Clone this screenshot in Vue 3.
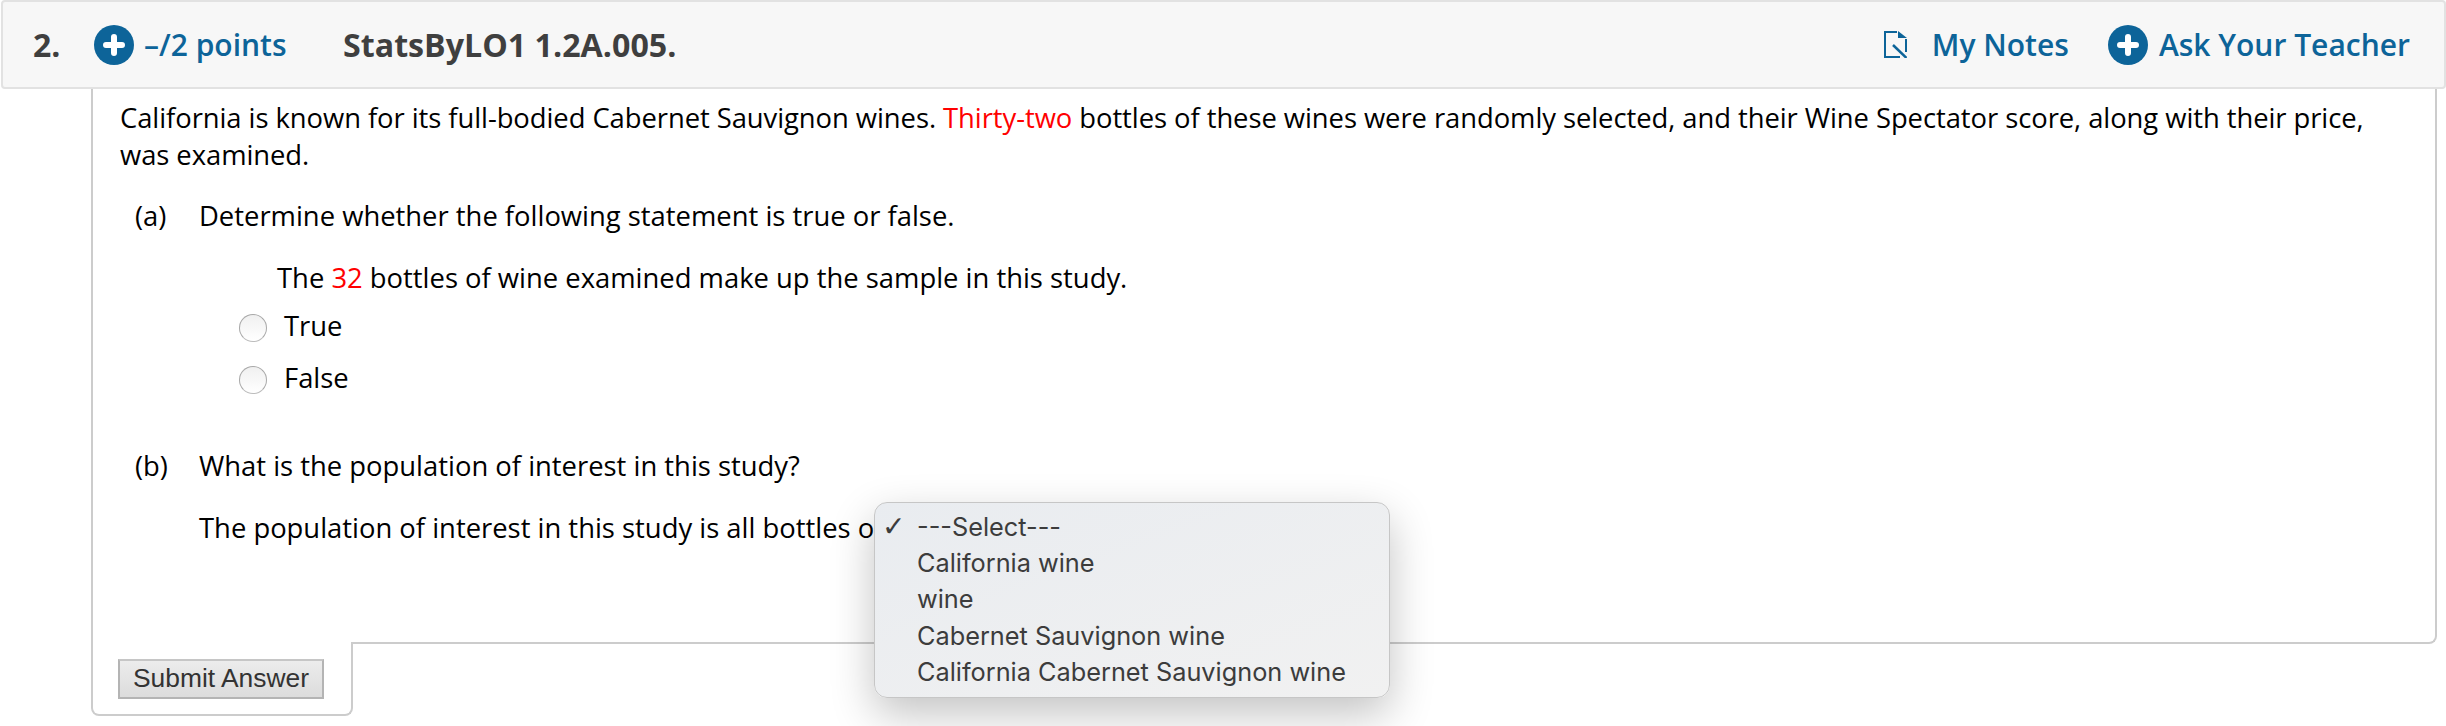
<script setup>
const options = ['California wine', 'wine', 'Cabernet Sauvignon wine', 'California Cabernet Sauvignon wine']
</script>

<template>
  <div class="page">
    <header class="head">
      <span class="num">2.</span>
      <span class="points">
        <svg class="plus" viewBox="0 0 40 40"><circle cx="20" cy="20" r="20" fill="#0d6499"/><path d="M20 12v16M12 20h16" stroke="#fff" stroke-width="6" stroke-linecap="round"/></svg>
        <span>–/2 points</span>
      </span>
      <span class="code">StatsByLO1 1.2A.005.</span>
      <span class="links">
        <svg class="note" viewBox="0 0 23 27"><path d="M13 1H1v25h15M22 8v13" fill="none" stroke="#0d6499" stroke-width="2"/><path d="M14 0l9 7h-9z" fill="#0d6499"/><path d="M9 14l13.500 13" stroke="#0d6499" stroke-width="2.500"/></svg>
        <span class="notes">My Notes</span>
        <svg class="plus" viewBox="0 0 40 40"><circle cx="20" cy="20" r="20" fill="#0d6499"/><path d="M20 12v16M12 20h16" stroke="#fff" stroke-width="6" stroke-linecap="round"/></svg>
        <span class="ask">Ask Your Teacher</span>
      </span>
    </header>
    <section class="body">
      <p class="intro">California is known for its full-bodied Cabernet Sauvignon wines. <span class="red">Thirty-two</span> bottles of these wines were randomly selected, and their Wine Spectator score, along with their price, was examined.</p>
      <div class="part part-a"><span class="label">(a)</span><span>Determine whether the following statement is true or false.</span></div>
      <p class="stmt">The <span class="red">32</span> bottles of wine examined make up the sample in this study.</p>
      <label class="radio first"><span class="dot"></span>True</label>
      <label class="radio second"><span class="dot"></span>False</label>
      <div class="part part-b"><span class="label">(b)</span><span>What is the population of interest in this study?</span></div>
      <p class="pop">The population of interest in this study is all bottles of</p>
    </section>
    <div class="tab"><button class="submit">Submit Answer</button></div>
    <ul class="menu">
      <li class="selected"><span class="check">✓</span>---Select---</li>
      <li v-for="o in options" :key="o">{{ o }}</li>
    </ul>
  </div>
</template>

<style scoped>
.page { position: relative; width: 2446px; height: 726px; overflow: hidden; background: #fff; font-family: "Open Sans", sans-serif; font-size: 27.4px; line-height: 37px; color: #000; }
p { margin: 0; }
.intro { letter-spacing: -0.06px; }
.head { box-sizing: border-box; height: 89px; margin-left: 1px; border: 2px solid #e2e2e2; border-radius: 4px; background: #f7f7f7; display: flex; align-items: center; padding-left: 30px; padding-right: 34px; font-weight: 600; font-size: 30px; color: #3f3f3f; }
.num { width: 61px; font-weight: 700; font-size: 32px; }
.code { font-weight: 700; font-size: 32.2px; }
.points { display: flex; align-items: center; gap: 10px; color: #0d6499; width: 249px; }
.plus { width: 40px; height: 40px; flex: none; }
.links { margin-left: auto; display: flex; align-items: center; color: #0d6499; }
.note { width: 23px; height: 27px; margin-right: 25px; }
.notes { margin-right: 39px; }
.ask { margin-left: 11px; }
.body { box-sizing: border-box; width: 2346px; height: 555px; margin-left: 91px; border: 2px solid #ccc; border-top: 0; border-radius: 0 0 8px 0; padding: 10px 40px 0 27px; position: relative; }
.red { color: #f00; }
.part { display: flex; margin-left: 15px; }
.label { width: 64px; }
.part-a { margin-top: 24px; }
.stmt { margin: 25px 0 0 157px; }
.radio { display: flex; align-items: center; margin-left: 119px; }
.first { margin-top: 11px; }
.second { margin-top: 15px; }
.dot { box-sizing: border-box; width: 28px; height: 28px; border-radius: 50%; border: 1px solid #a8a8a8; border-bottom-color: #bdbdbd; background: linear-gradient(#f0f0f0, #fff); margin-right: 17px; margin-top: 4px; }
.part-b { margin-top: 51px; }
.pop { margin: 25px 0 0 79px; }
.tab { box-sizing: border-box; position: relative; width: 262px; height: 74px; margin: -2px 0 0 91px; border: 2px solid #ccc; border-top: 0; border-radius: 0 0 8px 8px; background: #fff; padding: 17px 0 0 25px; }
.submit { box-sizing: border-box; display: block; width: 206px; height: 40px; padding: 0 0 1px; border: 2px solid #b4b4b4; border-top-color: #c6c6c6; background: linear-gradient(#ececec, #dcdcdc); font-family: "Liberation Sans", sans-serif; font-size: 26.400px; line-height: 33px; color: #333; }
.menu { position: absolute; box-sizing: border-box; left: 874px; top: 502px; width: 516px; height: 196px; margin: 0; padding: 6px 0 0 42px; list-style: none; border: 1px solid #c6c6c6; border-radius: 13px; background: linear-gradient(160deg, #e9ecf0, #f1f1f1); box-shadow: 0 16px 44px rgba(0,0,0,.24); font-family: Inter, sans-serif; font-size: 25.300px; line-height: 36.200px; color: #3c3c3c; }
.selected { position: relative; }
.check { position: absolute; left: -35px; top: 0; font-family: "DejaVu Sans", sans-serif; font-size: 28px; }
</style>
